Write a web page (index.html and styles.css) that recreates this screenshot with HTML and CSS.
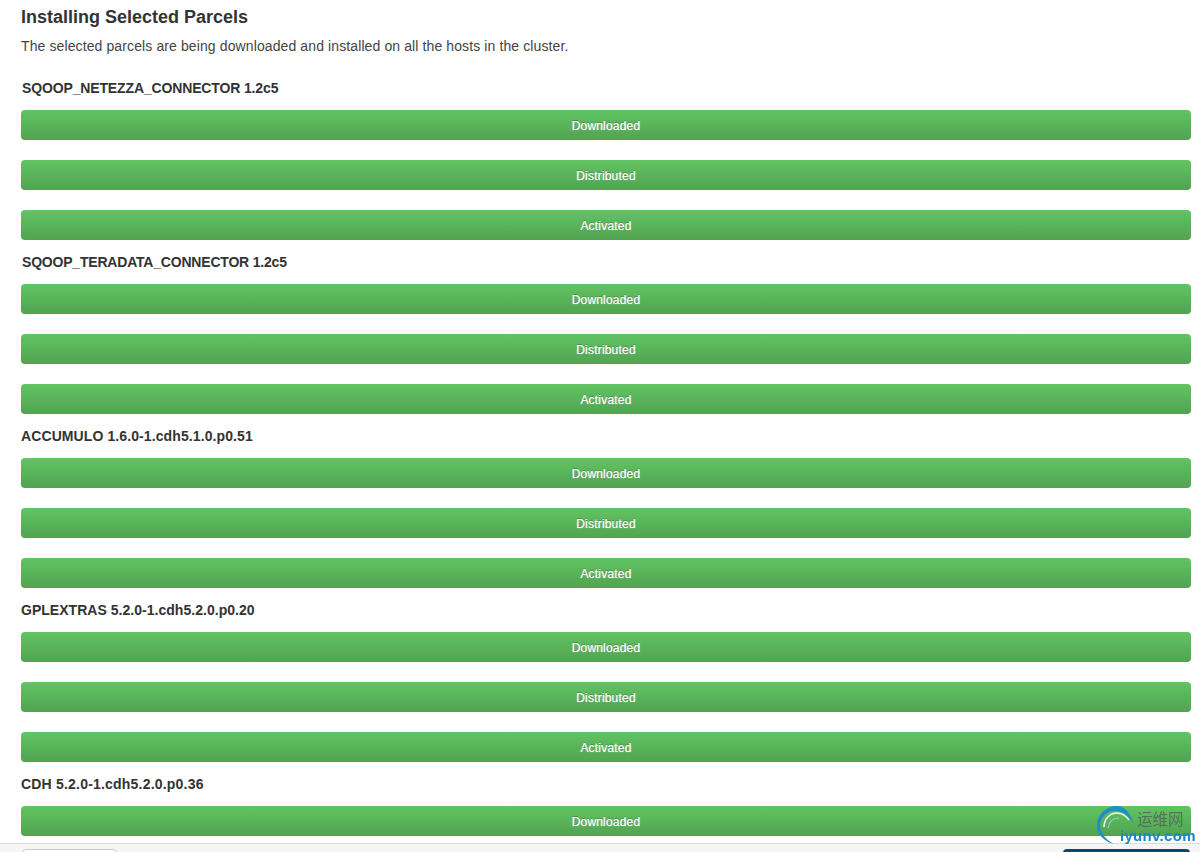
FILE: index.html
```html
<!DOCTYPE html>
<html lang="en">
<head>
<meta charset="utf-8">
<title>Installing Selected Parcels</title>
<link rel="stylesheet" href="styles.css">
</head>
<body>
<main class="page">
  <h1 class="title">Installing Selected Parcels</h1>
  <p class="lead">The selected parcels are being downloaded and installed on all the hosts in the cluster.</p>
  <div class="parcels">
    <section class="parcel">
      <h2 class="parcel-name nudge tight">SQOOP_NETEZZA_CONNECTOR 1.2c5</h2>
      <div class="bar">Downloaded</div>
      <div class="bar">Distributed</div>
      <div class="bar">Activated</div>
    </section>
    <section class="parcel">
      <h2 class="parcel-name nudge tighter">SQOOP_TERADATA_CONNECTOR 1.2c5</h2>
      <div class="bar">Downloaded</div>
      <div class="bar">Distributed</div>
      <div class="bar">Activated</div>
    </section>
    <section class="parcel">
      <h2 class="parcel-name loose">ACCUMULO 1.6.0-1.cdh5.1.0.p0.51</h2>
      <div class="bar">Downloaded</div>
      <div class="bar">Distributed</div>
      <div class="bar">Activated</div>
    </section>
    <section class="parcel">
      <h2 class="parcel-name slight">GPLEXTRAS 5.2.0-1.cdh5.2.0.p0.20</h2>
      <div class="bar">Downloaded</div>
      <div class="bar">Distributed</div>
      <div class="bar">Activated</div>
    </section>
    <section class="parcel">
      <h2 class="parcel-name looser">CDH 5.2.0-1.cdh5.2.0.p0.36</h2>
      <div class="bar">Downloaded</div>
    </section>
  </div>
</main>
<footer class="footer">
  <span class="btn-back"></span>
  <span class="btn-next"></span>
</footer>
<div class="watermark">
  <svg class="wm-logo" width="60" height="46" viewBox="0 0 60 46" aria-hidden="true">
    <path d="M18 40C7 37 0 29 1 20C2 9 11 2 21 2C29 2 35 10 37 19C33 12 27 7 20 7C11 7 5 13 4 21C4 29 10 36 18 40Z" fill="#1f8fc4"/>
    <path d="M8 23C8 15 14 9 21 9C26 9 30 12 33 16" fill="none" stroke="#e8f6fa" stroke-width="1.6"/>
    <path d="M12 24C13 18 17 14 23 14" fill="none" stroke="#8fd0e0" stroke-width="1.2"/>
  </svg>
  <span class="wm-cn">运维网</span>
  <span class="wm-en">iyunv.com</span>
</div>
</body>
</html>
```
FILE: styles.css
```css
html, body {
  margin: 0;
  height: 100%;
  overflow: hidden;
  background: #fff;
}
body {
  font-family: "Liberation Sans", Arial, sans-serif;
  color: #333;
  font-size: 14px;
}
.page {
  padding: 7px 9px 0 21px;
}
.title {
  margin: 0 0 9px;
  font-size: 18px;
  line-height: 20px;
  font-weight: bold;
  color: #333;
}
.lead {
  margin: 0 0 22px;
  line-height: 20px;
  color: #444;
  letter-spacing: .11px;
}
.parcels {
  display: flex;
  flex-direction: column;
  gap: 12px;
}
.parcel {
  display: flex;
  flex-direction: column;
  gap: 20px;
}
.parcel-name {
  margin: 0 0 -8px;
  font-size: 14px;
  line-height: 20px;
  font-weight: bold;
  color: #333;
}
.nudge {
  padding-left: 1px;
}
.tight {
  letter-spacing: -.14px;
}
.tighter {
  letter-spacing: -.2px;
}
.slight {
  letter-spacing: .03px;
}
.loose {
  letter-spacing: .1px;
}
.looser {
  letter-spacing: .2px;
}
.bar {
  height: 30px;
  line-height: 32px;
  border-radius: 4px;
  background: linear-gradient(to bottom, #62c462, #51a351);
  color: #fff;
  font-size: 12px;
  letter-spacing: .2px;
  text-align: center;
  text-shadow: 0 -1px 0 rgba(0, 0, 0, .25), 0 0 1px rgba(255, 255, 255, .7);
}
.footer {
  position: fixed;
  left: 0;
  right: 0;
  bottom: 0;
  height: 9px;
  box-sizing: border-box;
  border-top: 1px solid #ddd;
  background: #f5f5f5;
  overflow: hidden;
}
.btn-back {
  position: absolute;
  left: 22px;
  top: 5px;
  width: 95px;
  height: 20px;
  box-sizing: border-box;
  border: 1px solid #ccc;
  border-radius: 4px;
  background: #fff;
}
.btn-next {
  position: absolute;
  left: 1063px;
  top: 5px;
  width: 127px;
  height: 20px;
  border-radius: 4px;
  background: #0b4a66;
}
.watermark {
  position: fixed;
  left: 1096px;
  top: 804px;
  width: 104px;
  height: 46px;
}
.wm-logo {
  position: absolute;
  left: 0;
  top: 0;
}
.wm-cn {
  position: absolute;
  left: 41px;
  top: 5px;
  font-family: "Noto Sans CJK SC", sans-serif;
  font-size: 15.5px;
  line-height: 18px;
  color: #55705a;
}
.wm-en {
  position: absolute;
  left: 24px;
  top: 24px;
  font-size: 15px;
  line-height: 16px;
  font-weight: bold;
  letter-spacing: .3px;
  color: #1c86c8;
}
```
